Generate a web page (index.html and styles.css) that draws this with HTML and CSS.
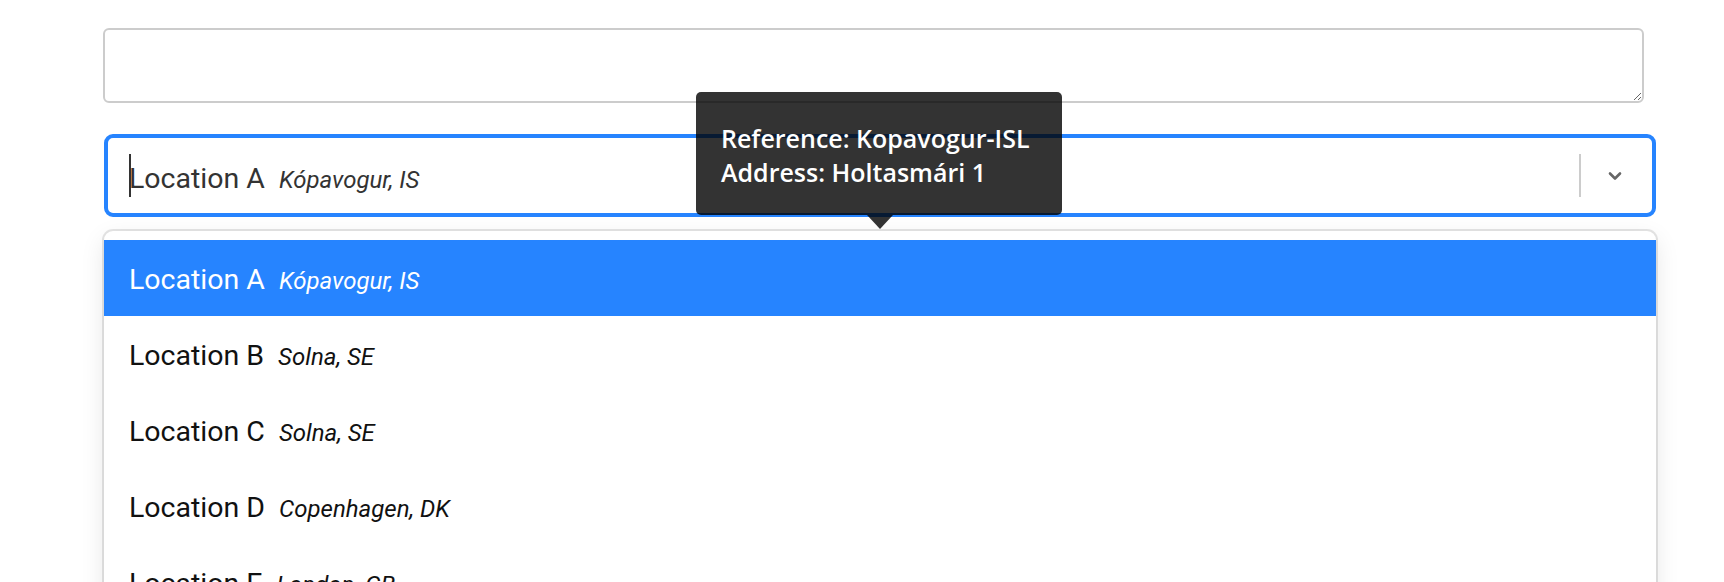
FILE: index.html
```html
<!DOCTYPE html>
<html lang="en">
<head>
  <meta charset="UTF-8">
  <title>Location picker</title>
  <link rel="stylesheet" href="styles.css">
</head>
<body>
  <div class="form">
    <textarea class="notes"></textarea>

    <div class="select">
      <div class="control">
        <div class="value">
          <span class="caret"></span>
          <span class="name">Location A</span>
          <span class="city">Kópavogur, IS</span>
        </div>
        <div class="indicators">
          <span class="separator"></span>
          <svg class="chevron" width="14" height="10" viewBox="0 0 14 10">
            <path d="M2 2.5 L7 7.5 L12 2.5" fill="none" stroke="#666" stroke-width="2.6" stroke-linecap="round" stroke-linejoin="round"/>
          </svg>
        </div>
      </div>

      <div class="menu">
        <div class="option selected"><span class="name">Location A</span><span class="city">Kópavogur, IS</span></div>
        <div class="option"><span class="name">Location B</span><span class="city">Solna, SE</span></div>
        <div class="option"><span class="name">Location C</span><span class="city">Solna, SE</span></div>
        <div class="option"><span class="name">Location D</span><span class="city">Copenhagen, DK</span></div>
        <div class="option"><span class="name">Location E</span><span class="city">London, GB</span></div>
      </div>

      <!-- hover tooltip for the focused option -->
      <div class="tooltip">
        Reference: Kopavogur-ISL<br>
        Address: Holtasmári 1
      </div>
    </div>
  </div>
</body>
</html>
```

FILE: styles.css
```css
html, body {
  margin: 0;
  padding: 0;
  background: #ffffff;
  overflow: hidden;
  height: 582px;
}

.form {
  width: 1552px;
  margin-left: 104px;
  padding-top: 28px;
  font-family: Roboto, "Noto Sans", sans-serif;
}

.notes {
  display: block;
  width: 1541px;
  height: 75px;
  margin: 0 0 31px -1px;
  box-sizing: border-box;
  border: 2px solid #cccccc;
  border-radius: 6px;
  resize: vertical;
  background: #ffffff;
  outline: none;
}

.select {
  position: relative;
}

.control {
  display: flex;
  align-items: center;
  height: 83px;
  box-sizing: border-box;
  border: 4px solid #2684ff;
  border-radius: 9px;
  background: #ffffff;
}

.value {
  flex: 1;
  display: flex;
  align-items: baseline;
  padding: 8px 0 0 21px;
  color: #333333;
}

.caret {
  align-self: center;
  width: 2px;
  height: 43px;
  margin: -8px -2px 0 0;
  background: #333333;
}

.name {
  font-size: 28.5px;
}

.city {
  font-size: 24px;
  font-style: italic;
  margin-left: 14px;
}

.indicators {
  display: flex;
  align-items: center;
  height: 100%;
}

.separator {
  width: 2px;
  height: 43px;
  background: #cccccc;
}

.chevron {
  margin: 0 30px 0 27px;
}

.menu {
  margin-top: 14px;
  padding-top: 9px;
  background: #ffffff;
  border-radius: 9px;
  box-shadow: 0 0 0 2px rgba(0, 0, 0, 0.1), 0 8px 24px rgba(0, 0, 0, 0.1);
  overflow: hidden;
}

.option {
  display: flex;
  align-items: baseline;
  height: 76px;
  line-height: 80px;
  padding-left: 25px;
  color: #111111;
}

.option.selected {
  background: #2684ff;
  color: #ffffff;
}

.tooltip {
  position: absolute;
  left: 592px;
  top: -42px;
  width: 366px;
  height: 123px;
  box-sizing: border-box;
  padding: 29px 0 0 25px;
  background: rgba(0, 0, 0, 0.8);
  border-radius: 5px;
  color: #ffffff;
  font-family: "Open Sans", Lato, sans-serif;
  font-size: 25px;
  font-weight: 600;
  line-height: 34px;
}

.tooltip::after {
  content: "";
  position: absolute;
  left: 171px;
  bottom: -14px;
  border-left: 13px solid transparent;
  border-right: 13px solid transparent;
  border-top: 14px solid rgba(0, 0, 0, 0.8);
}
```
